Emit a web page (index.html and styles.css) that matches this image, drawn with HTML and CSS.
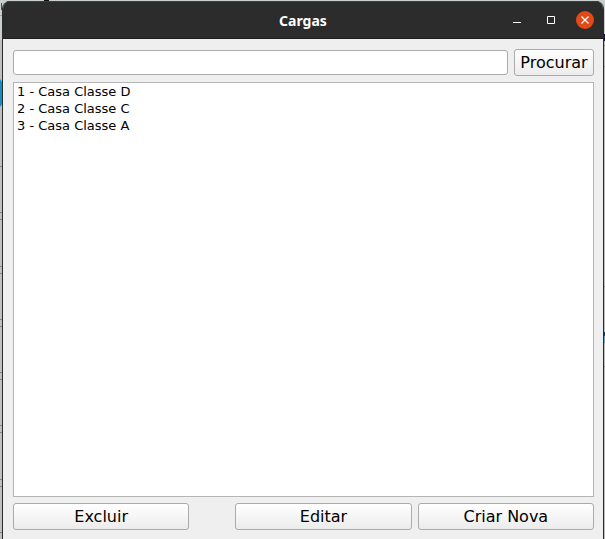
FILE: index.html
```html
<!DOCTYPE html>
<html lang="pt-BR">
<head>
<meta charset="utf-8">
<meta name="viewport" content="width=device-width, initial-scale=1">
<title>Cargas</title>
<link rel="stylesheet" href="styles.css">
</head>
<body>
<svg class="backdrop" width="100%" height="100%" aria-hidden="true">
  <rect width="100%" height="100%" fill="#bfbfbf"/>
  <rect width="100%" height="40" fill="#c9cfcd"/>
  <path d="M0 166.5h3M0 212.5h3M0 219.5h3M0 266.5h3M0 273.5h3M0 319.5h3M0 326.5h3M0 372.5h3M0 379.5h3M0 425.5h3M0 432.5h3M0 479.5h3M0 486.5h3M0 532.5h3" stroke="#858585"/>
  <path d="M0 15.5h3" stroke="#a0a0a0"/>
  <path d="M0 79q2 2 3 5v18q-1 3-3 5z" fill="#168fc0"/>
  <path d="M1.5 3v7" stroke="#31538f"/>
  <path d="M44 0h5v1h-5z" fill="#111"/>
  <svg x="100%" overflow="visible">
    <path d="M-1 34h1v7h-1z" fill="#10123c"/>
    <path d="M-1 45.5h1M-1 66.5h1M-1 286.5h1M-1 366.5h1" stroke="#8b8b8b"/>
    <path d="M-1 332h1v4h-1z" fill="#123d66"/>
    <path d="M-1 336h1v7h-1z" fill="#62a9c4"/>
  </svg>
</svg>
<main class="window">
  <header class="titlebar">
    <h1 class="title">Cargas</h1>
    <div class="window-controls">
      <button class="control" type="button" aria-label="Minimizar">
        <svg width="18" height="18"><path d="M5 11.5h8" stroke="#fff"/></svg>
      </button>
      <button class="control" type="button" aria-label="Maximizar">
        <svg width="18" height="18"><path d="M5.500 5.500h7v7h-7z" fill="none" stroke="#fff"/></svg>
      </button>
      <button class="control close" type="button" aria-label="Fechar">
        <svg width="18" height="18"><path d="M5.500 5.500l7 7m0-7l-7 7" stroke="#fff" stroke-width="1.3"/></svg>
      </button>
    </div>
  </header>
  <div class="content">
    <form class="search">
      <input class="field" type="text" aria-label="Procurar carga">
      <button class="button" type="button">Procurar</button>
    </form>
    <ul class="list">
      <li>1 - Casa Classe D</li>
      <li>2 - Casa Classe C</li>
      <li>3 - Casa Classe A</li>
    </ul>
    <div class="actions">
      <button class="button wide" type="button">Excluir</button>
      <span class="spacer"></span>
      <button class="button wide" type="button">Editar</button>
      <button class="button wide" type="button">Criar Nova</button>
    </div>
  </div>
</main>
</body>
</html>
```
FILE: styles.css
```css
* {
  box-sizing: border-box;
}

body {
  margin: 0;
  min-height: 100vh;
  display: flex;
  padding: 1px 1px 0 2px;
  font-family: "DejaVu Sans", sans-serif;
  color: #000;
}

.backdrop {
  position: fixed;
  inset: 0;
  z-index: -1;
}

.window {
  flex: 1;
  display: flex;
  flex-direction: column;
  border: solid #2b2b2b;
  border-width: 0 1px;
  border-radius: 8px 8px 0 0;
  background: #efefef;
  overflow: hidden;
}

.titlebar {
  display: grid;
  grid-template-columns: 1fr auto 1fr;
  align-items: center;
  height: 38px;
  padding-right: 9px;
  background: #2c2c2c;
  border-top: 1px solid #3b3e3d;
  border-bottom: 1px solid #1f1c1c;
}

.title {
  grid-column: 2;
  margin: 0;
  padding: 2px 0 0 9px;
  font: bold 14px/20px "Noto Sans", sans-serif;
  color: #fff;
}

.window-controls {
  display: flex;
  justify-content: flex-end;
  gap: 16px;
}

.control {
  display: block;
  width: 18px;
  height: 18px;
  padding: 0;
  border: 0;
  border-radius: 50%;
  background: none;
}

.control svg {
  display: block;
}

.close {
  background: #e24a17;
}

.content {
  flex: 1;
  display: flex;
  flex-direction: column;
  gap: 6px;
  padding: 10px 9px 9px 10px;
}

.search,
.actions {
  display: flex;
  align-items: center;
  gap: 6px;
}

.field {
  flex: 1;
  min-width: 0;
  height: 25px;
  padding: 0 4px;
  border: 1px solid #ababab;
  border-radius: 3px;
  background: #fff;
  font: 16px "DejaVu Sans", sans-serif;
}

.button {
  min-width: 80px;
  height: 27px;
  padding: 0 5px;
  border: 1px solid #ababab;
  border-radius: 3px;
  background: linear-gradient(#fff, #ececec);
  font: 16px/20px "DejaVu Sans", sans-serif;
  color: #000;
}

.wide {
  flex: 1;
}

.spacer {
  width: 34px;
}

.list {
  flex: 1;
  margin: 0;
  padding: 0 3px;
  border: 1px solid #b5b5b5;
  background: #fff;
  list-style: none;
  font-size: 13px;
  line-height: 17px;
}
```
